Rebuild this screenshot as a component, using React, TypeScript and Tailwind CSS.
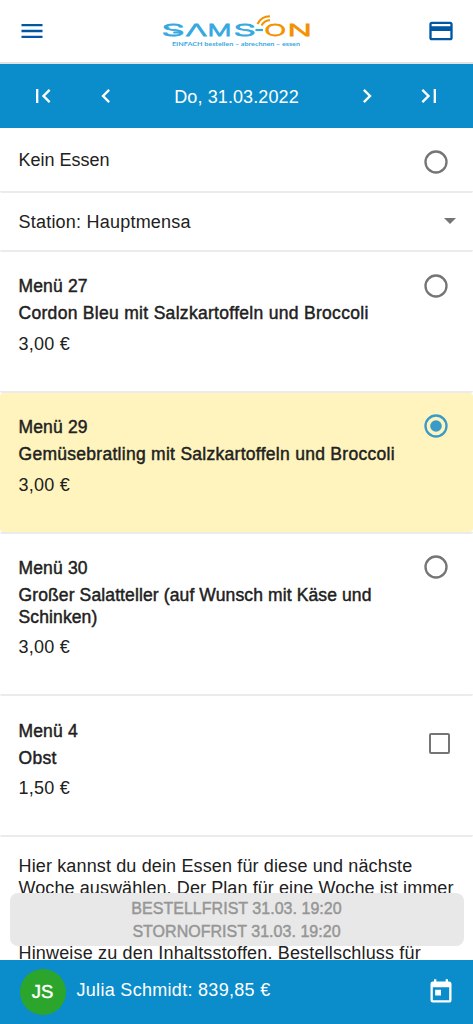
import React from "react";
import {
  MdMenu,
  MdCreditCard,
  MdFirstPage,
  MdChevronLeft,
  MdChevronRight,
  MdLastPage,
  MdToday,
} from "react-icons/md";

const medium = "[-webkit-text-stroke:0.45px_currentColor]";

type Meal = {
  name: string;
  title: string;
  price: string;
  tracking?: string;
  selected?: boolean;
  multiple?: boolean;
};

const meals: Meal[] = [
  { name: "Menü 27", title: "Cordon Bleu mit Salzkartoffeln und Broccoli", price: "3,00 €", tracking: "tracking-[0.3px]" },
  { name: "Menü 29", title: "Gemüsebratling mit Salzkartoffeln und Broccoli", price: "3,00 €", tracking: "tracking-[0.280px]", selected: true },
  { name: "Menü 30", title: "Großer Salatteller (auf Wunsch mit Käse und Schinken)", price: "3,00 €", tracking: "tracking-[0.120px]" },
  { name: "Menü 4", title: "Obst", price: "1,50 €", tracking: "tracking-[0.3px]", multiple: true },
];

function Logo() {
  return (
    <svg width="150" height="36" viewBox="0 0 150 36" className="block overflow-visible" aria-label="SAMS-ON">
      <g fontFamily="Inter, sans-serif" fontWeight="300" fontSize="16.4" strokeWidth="0.75">
        <g fill="#36a9e1" stroke="#36a9e1">
          <text x="0.3" y="22" textLength="11.6" lengthAdjust="spacingAndGlyphs" transform="scale(2 1)">S</text>
          <text x="12.2" y="22" textLength="10.8" lengthAdjust="spacingAndGlyphs" transform="scale(2 1)">Λ</text>
          <text x="23.200" y="22" textLength="12" lengthAdjust="spacingAndGlyphs" transform="scale(2 1)">M</text>
          <text x="36.2" y="22" textLength="11.2" lengthAdjust="spacingAndGlyphs" transform="scale(2 1)">S</text>
        </g>
        <g fill="#f39200" stroke="#f39200">
          <text x="51.600" y="22" textLength="11" lengthAdjust="spacingAndGlyphs" transform="scale(2 1)">O</text>
          <text x="63.200" y="22" textLength="12.200" lengthAdjust="spacingAndGlyphs" transform="scale(2 1)">N</text>
        </g>
      </g>
      <path d="M94.500 16h7.500" stroke="#36a9e1" strokeWidth="2.2" />
      <path d="M3.500 11.600h5M3.500 13.400h5" stroke="#36a9e1" strokeWidth="0.8" />
      <path d="M13 18.500h5" stroke="#36a9e1" strokeWidth="1.800" strokeLinecap="round" />
      <g fill="none" stroke="#f39200" strokeWidth="2">
        <path d="M96.500 10c2.500-5 7-7.700 12.500-7.700" />
        <path d="M100.500 11.500c1.900-3.500 4.700-5.200 8.500-5.200" />
      </g>
      <text
        x="11"
        y="32"
        fill="#36a9e1"
        fontFamily="Lato, sans-serif"
        fontWeight="700"
        fontSize="6.400"
        textLength="128"
        lengthAdjust="spacingAndGlyphs"
      >
        EINFACH bestellen – abrechnen – essen
      </text>
    </svg>
  );
}

function Radio({ checked }: { checked?: boolean }) {
  return (
    <svg width="28" height="28" viewBox="0 0 24 24" className={checked ? "block text-[#3a9bcb]" : "block text-[#757575]"}>
      <circle cx="12" cy="12" r="9" fill="none" stroke="currentColor" strokeWidth="2" />
      {checked && <circle cx="12" cy="12" r="5" fill="currentColor" />}
    </svg>
  );
}

function Divider() {
  return <div className="h-[2px] shrink-0 rounded-b bg-[#ebebeb]" />;
}

function MealRow({ meal }: { meal: Meal }) {
  return (
    <>
      <div className={`flex pt-[23.400px] pb-[36.300px] pl-[18.500px] ${meal.selected ? "rounded bg-[#fff4bd]" : ""}`}>
        <div className="w-[390px] shrink-0">
          <div className={`text-[17.500px] leading-[22px] tracking-[0.150px] ${medium}`}>{meal.name}</div>
          <div className={`mt-[6px] text-[17.500px] leading-[21.300px] ${meal.tracking ?? ""} ${medium}`}>{meal.title}</div>
          <div className="mt-[8px] text-[18px] leading-[22px] tracking-[0.250px]">{meal.price}</div>
        </div>
        {meal.multiple ? (
          <div className="mt-[13px] ml-[20.500px] size-[21px] rounded-[2px] border-[2.300px] border-[#757575]" />
        ) : (
          <div className="-mt-[3.900px] ml-[13.500px]">
            <Radio checked={meal.selected} />
          </div>
        )}
      </div>
      <Divider />
    </>
  );
}

export default function App() {
  return (
    <div className="relative flex h-[1024px] w-[473px] flex-col overflow-hidden bg-white font-['Liberation_Sans',Arial,sans-serif] text-[18px] text-[#212121]">
      <header className="flex h-[64px] shrink-0 items-start justify-between border-b-2 border-[#e0e2e3] px-[18px] pt-[14px]">
        <MdMenu className="mt-[3px] size-[28px] text-[#0057a3]" />
        <div className="mr-[2px]">
          <Logo />
        </div>
        <MdCreditCard className="mt-[3px] size-[28px] text-[#0057a3]" />
      </header>

      <nav className="flex h-[64px] shrink-0 items-center bg-[#0b8dcb] pl-[29px] text-white">
        <MdFirstPage className="size-[28px]" />
        <MdChevronLeft className="ml-[35px] size-[28px]" />
        <div className="w-[233px] pt-px text-center leading-[22px] tracking-[0.100px]">Do, 31.03.2022</div>
        <MdChevronRight className="size-[28px]" />
        <MdLastPage className="ml-[34px] size-[28px]" />
      </nav>

      <main className="flex min-h-0 flex-1 flex-col overflow-hidden">
        <div className="flex h-[63px] shrink-0 justify-between pt-[20px] pr-[23px] pl-[18.500px]">
          <span className="leading-[24px]">Kein Essen</span>
          <Radio />
        </div>
        <Divider />
        <div className="flex h-[57px] shrink-0 justify-between pt-[17px] pr-[17.500px] pl-[18.500px]">
          <span className="leading-[24px] tracking-[0.220px]">Station: Hauptmensa</span>
          <svg width="12" height="6" viewBox="0 0 12 6" className="mt-[8px] text-[#757575]">
            <path d="M0 0h12L6 6z" fill="currentColor" />
          </svg>
        </div>
        <Divider />
        {meals.map((meal) => (
          <MealRow key={meal.name} meal={meal} />
        ))}
        <div className="shrink-0 pt-[19px] pl-[18.500px] leading-[21.650px] whitespace-nowrap">
          <p className="tracking-[0.140px]">Hier kannst du dein Essen für diese und nächste</p>
          <p className="tracking-[0.090px]">Woche auswählen. Der Plan für eine Woche ist immer</p>
          <p className="mt-[43.300px] tracking-[0.170px]">Hinweise zu den Inhaltsstoffen. Bestellschluss für</p>
        </div>
      </main>

      <div className="absolute top-[892.500px] left-[9.500px] h-[53.500px] w-[454px] rounded-[8px] bg-[#e8e8e8] pt-[5.500px] text-center text-[16px] leading-[22.500px] tracking-[0.030px] text-[#969696]">
        <div className={medium}>BESTELLFRIST 31.03. 19:20</div>
        <div className={medium}>STORNOFRIST 31.03. 19:20</div>
      </div>

      <footer className="flex h-[64px] shrink-0 items-center bg-[#0b8dcb] pr-[18px] pl-[19.500px] text-white">
        <div className={`flex size-[46px] items-center justify-center rounded-full bg-[#2ba52b] text-[18.500px] ${medium}`}>JS</div>
        <div className="ml-[11px] flex-1 pb-[4px] leading-[22px] tracking-[0.300px]">Julia Schmidt: 839,85 €</div>
        <MdToday className="size-[28px]" />
      </footer>
    </div>
  );
}
